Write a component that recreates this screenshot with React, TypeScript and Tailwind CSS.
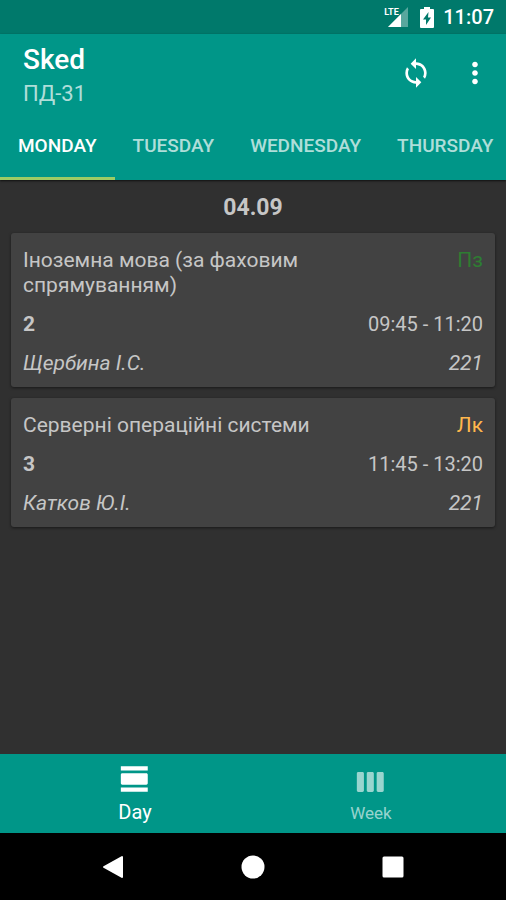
import React, { useState } from 'react';
import clsx from 'clsx';
import { MdMoreVert, MdSync } from 'react-icons/md';

interface Lesson {
  subject: string;
  kind: string;
  kindColor: string;
  order: number;
  time: string;
  teacher: string;
  room: string;
}

const DAYS = ['MONDAY', 'TUESDAY', 'WEDNESDAY', 'THURSDAY'];

const LESSONS: Lesson[] = [
  {
    subject: 'Іноземна мова (за фаховим спрямуванням)',
    kind: 'Пз',
    kindColor: 'text-[#2e7d32]',
    order: 2,
    time: '09:45 - 11:20',
    teacher: 'Щербина І.С.',
    room: '221',
  },
  {
    subject: 'Серверні операційні системи',
    kind: 'Лк',
    kindColor: 'text-[#ffb74d]',
    order: 3,
    time: '11:45 - 13:20',
    teacher: 'Катков Ю.І.',
    room: '221',
  },
];

function StatusBar() {
  return (
    <div className="flex h-[34px] items-center justify-end bg-[#00796b] pr-3 text-white">
      <div className="relative h-5 w-6">
        <svg viewBox="0 0 24 20" className="h-5 w-6">
          <path d="M24 0v20H4z" fill="#fff" fillOpacity=".35" />
          <path d="M17 7v13H4z" fill="#fff" />
        </svg>
        <span className="absolute top-0 left-0 font-[Roboto,sans-serif] text-[9px] leading-[10px] font-bold">
          LTE
        </span>
      </div>
      <svg viewBox="0 0 14 21" className="ml-3 h-[21px] w-[14px]" fill="#fff">
        <path
          fillRule="evenodd"
          d="M4 0h6v2h3a1 1 0 0 1 1 1v17a1 1 0 0 1-1 1H1a1 1 0 0 1-1-1V3a1 1 0 0 1 1-1h3zM8.5 5L3 12.5h3V18l5-7.500H8z"
        />
      </svg>
      <span className="ml-2 pl-px text-[20px] leading-6 font-medium">11:07</span>
    </div>
  );
}

function LessonCard({ lesson }: { lesson: Lesson }) {
  return (
    <article className="flex flex-col gap-3.5 rounded-[3px] bg-[#424242] px-3 pt-[15px] pb-[11px] shadow-[0_1px_3px_rgba(0,0,0,0.5)]">
      <div className="flex justify-between gap-4">
        <h2 className="max-w-[320px]">{lesson.subject}</h2>
        <span className={lesson.kindColor}>{lesson.kind}</span>
      </div>
      <div className="flex justify-between">
        <span className="font-bold">{lesson.order}</span>
        <span className="text-[20px]">{lesson.time}</span>
      </div>
      <div className="flex justify-between italic">
        <span>{lesson.teacher}</span>
        <span>{lesson.room}</span>
      </div>
    </article>
  );
}

export default function App() {
  const [day, setDay] = useState(DAYS[0]);

  return (
    <div className="flex min-h-screen flex-col bg-[#303030] font-[Roboto,'Noto_Sans',sans-serif]">
      <StatusBar />

      <header className="bg-[#009688] text-white shadow-[0_1px_2px_rgba(0,0,0,0.7)]">
        <div className="flex items-center justify-between pt-[9px] pr-3.5 pb-1.5 pl-[23px]">
          <div className="flex flex-col gap-[5px]">
            <h1 className="text-[28px] leading-[33px] font-medium">Sked</h1>
            <p className="text-[22px] leading-[26px] text-white/70">ПД-31</p>
          </div>
          <div className="flex items-center gap-[26px] pb-1">
            <button type="button" aria-label="Sync">
              <MdSync size={32} />
            </button>
            <button type="button" aria-label="More options">
              <MdMoreVert size={34} />
            </button>
          </div>
        </div>
        <div role="tablist" className="flex overflow-hidden">
          {DAYS.map((name) => (
            <button
              key={name}
              type="button"
              role="tab"
              aria-selected={name === day}
              onClick={() => setDay(name)}
              className={clsx(
                'h-[67px] shrink-0 border-b-[3px] px-[18px] pt-[3px] text-[19px] font-medium',
                name === day ? 'border-[#9ccc65] text-white' : 'border-transparent text-white/70',
              )}
            >
              {name}
            </button>
          ))}
        </div>
      </header>

      <main className="flex grow flex-col gap-[11px] px-[11px] pt-[15px] text-[21px] leading-[25px] text-[#c6c6c6]">
        <p className="pb-0.5 text-center text-[23px] font-bold">04.09</p>
        {LESSONS.map((lesson) => (
          <LessonCard key={lesson.order} lesson={lesson} />
        ))}
      </main>

      <nav className="flex h-[79px] justify-center bg-[#009688] px-4 text-white">
        <a href="#day" className="flex max-w-[236px] grow basis-0 flex-col items-center pt-2">
          <svg viewBox="0 0 24 24" className="size-[34px]" fill="currentColor">
            <path d="M2 21h19v-3H2v3zM20 8H3c-.55 0-1 .45-1 1v6c0 .55.45 1 1 1h17c.55 0 1-.45 1-1V9c0-.55-.45-1-1-1zM2 3v3h19V3H2z" />
          </svg>
          <span className="mt-1 text-[20px] leading-6">Day</span>
        </a>
        <a href="#week" className="flex max-w-[236px] grow basis-0 flex-col items-center pt-[11px] text-white/60">
          <svg viewBox="0 0 24 24" className="size-[34px]" fill="currentColor">
            <path d="M6 5H3c-.55 0-1 .45-1 1v12c0 .55.45 1 1 1h3c.55 0 1-.45 1-1V6c0-.55-.45-1-1-1zm14 0h-3c-.55 0-1 .45-1 1v12c0 .55.45 1 1 1h3c.55 0 1-.45 1-1V6c0-.55-.45-1-1-1zm-7 0h-3c-.55 0-1 .45-1 1v12c0 .55.45 1 1 1h3c.55 0 1-.45 1-1V6c0-.55-.45-1-1-1z" />
          </svg>
          <span className="mt-1 text-[17px] leading-5">Week</span>
        </a>
      </nav>

      {/* System navigation */}
      <div className="flex h-[67px] items-center justify-center gap-[116px] bg-black">
        <button type="button" aria-label="Back">
          <svg viewBox="0 0 24 24" className="size-6" fill="#fff" stroke="#fff" strokeWidth="2" strokeLinejoin="round">
            <path d="M3 12L21 2v20z" />
          </svg>
        </button>
        <button type="button" aria-label="Home">
          <svg viewBox="0 0 24 24" className="size-6" fill="#fff">
            <circle cx="12" cy="12" r="11.500" />
          </svg>
        </button>
        <button type="button" aria-label="Recent apps">
          <svg viewBox="0 0 24 24" className="size-6" fill="#fff">
            <rect x="1.500" y="1.500" width="21" height="21" rx="1.500" />
          </svg>
        </button>
      </div>
    </div>
  );
}
